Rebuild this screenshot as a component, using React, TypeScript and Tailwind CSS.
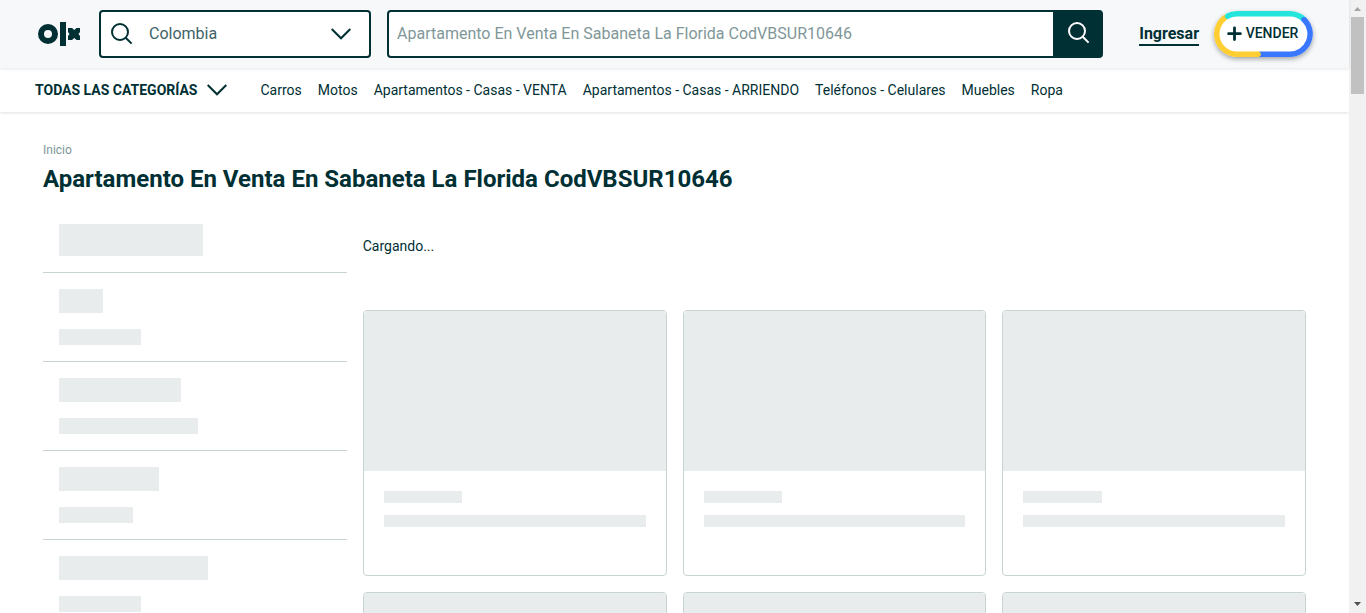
import React from 'react';

const categories = [
  'Carros',
  'Motos',
  'Apartamentos - Casas - VENTA',
  'Apartamentos - Casas - ARRIENDO',
  'Teléfonos - Celulares',
  'Muebles',
  'Ropa',
];

const filterGroups = [
  ['w-11', 'w-[82px]'],
  ['w-[122px]', 'w-[139px]'],
  ['w-[100px]', 'w-[74px]'],
  ['w-[149px]', 'w-[82px]'],
  ['w-[122px]', 'w-[139px]'],
];

function Logo() {
  return (
    <svg width="43" height="24" viewBox="0 0 43 24" fill="#002f34" aria-hidden="true">
      <circle cx="10" cy="12" r="7" fill="none" stroke="#002f34" strokeWidth="6" />
      <path d="M22 0h6v24h-6z" />
      <path d="M30 6h4l2.300 2L38.500 6H42v4l-1.500 2 1.500 2v4h-3.500l-2.200-2L34 18h-4v-4l1.500-2-1.500-2z" />
    </svg>
  );
}

function SearchIcon() {
  return (
    <svg width="22" height="22" viewBox="0 0 22 22" fill="none" stroke="currentColor" strokeWidth="2" aria-hidden="true">
      <circle cx="9" cy="9" r="8" />
      <path d="M14.700 14.700 20.600 20.600" />
    </svg>
  );
}

function Chevron() {
  return (
    <svg width="20" height="12" viewBox="0 0 20 12" fill="none" stroke="currentColor" strokeWidth="2" aria-hidden="true">
      <path d="M.700 1 10 10.300 19.300 1" />
    </svg>
  );
}

function SellButton() {
  return (
    <button type="button" className="relative ml-[15px] flex h-[46px] w-[99px] shrink-0 items-center justify-center rounded-full bg-white pb-0.5 pr-0.5 text-sm font-medium leading-4 shadow-[0_2px_5px_rgba(0,0,0,0.35)]">
      <svg className="absolute inset-0" width="99" height="46" viewBox="0 0 99 46" fill="none" strokeWidth="5.500" aria-hidden="true">
        <path d="M90 8.500A20.250 20.250 0 0 1 76 43.250H45" stroke="#3a77ff" />
        <path d="M44.500 43.250H23A20.250 20.250 0 0 1 12.500 5.700" stroke="#ffce32" />
        <circle cx="44" cy="43.250" r="2.750" fill="#ffce32" />
        <path d="M13.500 5.200A20.250 20.250 0 0 1 23 2.750H76A20.250 20.250 0 0 1 90 8.500" stroke="#23e5db" />
        <circle cx="13.500" cy="5.300" r="2.600" fill="#23e5db" />
        <circle cx="90" cy="8.600" r="2.700" fill="#3a77ff" />
      </svg>
      <svg className="mr-1" width="15" height="15" viewBox="0 0 15 15" stroke="currentColor" strokeWidth="2.800" strokeLinecap="round" aria-hidden="true">
        <path d="M7.500 1.800v11.800M1.600 7.700h11.800" />
      </svg>
      VENDER
    </button>
  );
}

function Header() {
  return (
    <header className="relative z-10 flex h-[68px] shrink-0 items-center bg-[#f7f8fa] pl-[38px] pr-9 shadow-[0_1px_3px_rgba(0,0,0,0.10)]">
      <a href="#" aria-label="OLX" className="mr-[18px] shrink-0">
        <Logo />
      </a>
      <div className="mr-4 flex h-12 w-[272px] shrink-0 items-center rounded border-2 border-[#002f34] bg-white pl-[10px] pr-[18px]">
        <SearchIcon />
        <input aria-label="Ubicación" defaultValue="Colombia" className="ml-4 min-w-0 flex-1 bg-transparent text-base text-[#406367] outline-none" />
        <button type="button" aria-label="Mostrar ubicaciones">
          <Chevron />
        </button>
      </div>
      <form className="flex h-12 min-w-0 flex-1 rounded border-2 border-[#002f34] bg-white" onSubmit={(e) => e.preventDefault()}>
        <input
          aria-label="Buscar"
          placeholder="Apartamento En Venta En Sabaneta La Florida CodVBSUR10646"
          className="min-w-0 flex-1 px-2 text-base outline-none placeholder:text-[#7f9799]"
        />
        <button type="submit" aria-label="Buscar" className="flex w-12 items-center justify-center bg-[#002f34] pb-[3px] pl-1 text-white">
          <SearchIcon />
        </button>
      </form>
      <a href="#" className="ml-9 shrink-0 border-b-2 border-[#002f34] pt-0.5 text-base font-bold leading-5">
        Ingresar
      </a>
      <SellButton />
    </header>
  );
}

function CategoryNav() {
  return (
    <nav className="flex h-11 shrink-0 items-center whitespace-nowrap bg-white pl-[35px] text-sm shadow-[0_1px_3px_rgba(0,0,0,0.12)]">
      <button type="button" className="mr-[34px] flex items-center gap-[9px] font-bold">
        TODAS LAS CATEGORÍAS
        <Chevron />
      </button>
      <ul className="flex gap-4">
        {categories.map((c) => (
          <li key={c}>
            <a href="#">{c}</a>
          </li>
        ))}
      </ul>
    </nav>
  );
}

function Filters() {
  return (
    <aside>
      <div className="border-b border-[#c8d3d4] p-4">
        <div className="h-8 w-36 bg-[#e8eced]" />
      </div>
      {filterGroups.map(([title, value], i) => (
        <div key={i} className="flex flex-col gap-4 border-b border-[#c8d3d4] p-4">
          <div className={`h-6 bg-[#e8eced] ${title}`} />
          <div className={`h-4 bg-[#e8eced] ${value}`} />
        </div>
      ))}
    </aside>
  );
}

function SkeletonCard() {
  return (
    <li className="h-[266px] overflow-hidden rounded border border-[#c8d3d4] bg-white">
      <div className="h-40 bg-[#e8eced]" />
      <div className="flex flex-col gap-3 p-5">
        <div className="h-3 w-[30%] bg-[#e8eced]" />
        <div className="h-3 bg-[#e8eced]" />
      </div>
    </li>
  );
}

function Scrollbar() {
  return (
    <div className="flex w-[17px] shrink-0 flex-col items-center bg-[#f1f1f1]" aria-hidden="true">
      <svg width="17" height="17" viewBox="0 0 17 17" fill="#a3a3a3">
        <path d="M5 11h7L8.500 7z" />
      </svg>
      <div className="h-[77px] w-[13px] bg-[#c1c1c1]" />
      <svg className="mt-auto" width="17" height="17" viewBox="0 0 17 17" fill="#505050">
        <path d="M5 6h7l-3.500 4z" />
      </svg>
    </div>
  );
}

export default function App() {
  return (
    <div className="flex h-screen overflow-hidden bg-white font-[Roboto,sans-serif] text-[#002f34]">
      <div className="flex min-w-0 flex-1 flex-col">
        <Header />
        <CategoryNav />
        <div className="min-h-0 flex-1 overflow-y-auto [scrollbar-width:none]">
          <main className="mx-auto max-w-[1263px] pt-[30px]">
            <a href="#" className="block text-xs leading-4 text-[#7f9799]">
              Inicio
            </a>
            <h1 className="mt-[5px] text-2xl font-bold leading-8">Apartamento En Venta En Sabaneta La Florida CodVBSUR10646</h1>
            <div className="mt-[13px] grid grid-cols-4 gap-4">
              <Filters />
              <section className="col-span-3">
                <p className="flex h-[102px] items-start pt-7 text-sm">Cargando...</p>
                <ul className="grid grid-cols-3 gap-4">
                  {Array.from({ length: 6 }, (_, i) => (
                    <SkeletonCard key={i} />
                  ))}
                </ul>
              </section>
            </div>
          </main>
        </div>
      </div>
      <Scrollbar />
    </div>
  );
}
